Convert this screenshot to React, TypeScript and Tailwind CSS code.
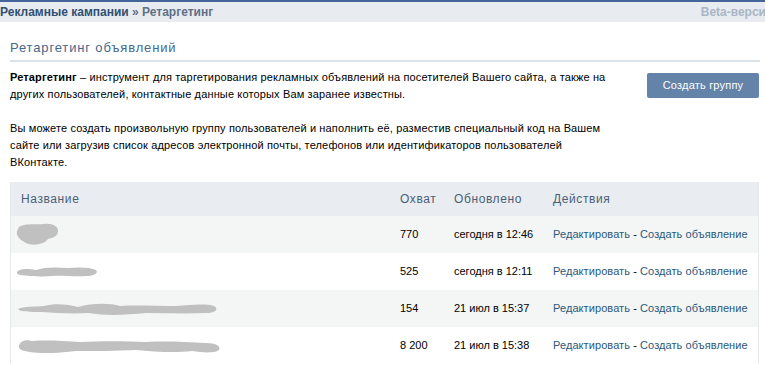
import React from 'react';

type Row = {
    blob: React.ReactNode;
    reach: string;
    updated: string;
};

const Blob: React.FC<{ w: number; h: number; d: string }> = ({ w, h, d }) => (
    <svg width={w} height={h} viewBox={`0 0 ${w} ${h}`} className="block">
        <path d={d} fill="#c0c0c0" />
    </svg>
);

const rows: Row[] = [
    {
        blob: <Blob w={44} h={23} d="M3 4 C9 0 20 2 28 1 C36 0 43 3 42 9 C41 14 36 15 32 16 C28 22 16 23 10 20 C4 17 0 13 1 8 Z" />,
        reach: '770',
        updated: 'сегодня в 12:46',
    },
    {
        blob: <Blob w={82} h={12} d="M2 5 C6 2 14 3 20 4 C28 1 40 1 52 2 C62 1 74 1 80 4 C83 7 78 10 70 10 C58 11 46 9 36 10 C26 11 12 10 4 9 C1 8 0 7 2 5 Z" />,
        reach: '525',
        updated: 'сегодня в 12:11',
    },
    {
        blob: <Blob w={202} h={16} d="M2 8 C8 5 18 6 28 5 C38 2 52 3 62 6 C76 2 94 2 104 5 C120 4 140 5 160 5 C174 4 190 2 198 5 C203 8 200 12 190 12 C170 13 150 12 130 12 C110 14 90 15 72 12 C56 13 40 12 26 11 C14 11 4 11 2 8 Z" />,
        reach: '154',
        updated: '21 июл в 15:37',
    },
    {
        blob: <Blob w={205} h={18} d="M3 9 C4 4 10 2 16 4 C30 3 48 4 64 5 C84 4 110 4 130 5 C150 4 170 5 190 6 C200 6 205 9 203 13 C200 16 188 16 176 14 C160 16 140 15 120 13 C100 14 80 14 60 14 C44 16 26 17 14 15 C6 14 2 12 3 9 Z" />,
        reach: '8 200',
        updated: '21 июл в 15:38',
    },
];

export default function App() {
    return (
        <div
            className="w-[765px] h-[365px] overflow-hidden bg-white text-[11px] text-black"
            style={{ fontFamily: '"Liberation Sans", Arial, sans-serif' }}
        >
            {/* Top bar */}
            <div className="h-[22px] border-t-2 border-[#44659a] bg-[#e8ebef] flex items-center justify-between">
                <div className="font-bold text-[12px] whitespace-nowrap">
                    <span className="text-[#2f4f73]">Рекламные кампании</span>
                    <span className="text-[#5d7188]"> » Ретаргетинг</span>
                </div>
                <div className="font-bold text-[12px] text-[#a8b6c6] whitespace-nowrap -mr-[8px]">Beta-версия</div>
            </div>

            <div className="pl-[10px] pr-[5px]">
                {/* Heading */}
                <div className="mt-[18px] pb-[4px] border-b-2 border-[#dae1e8]">
                    <h1 className="text-[13px] leading-[16px] tracking-[0.85px] text-[#45688e]">Ретаргетинг объявлений</h1>
                </div>

                {/* Intro */}
                <div className="flex justify-between mt-[7px]">
                    <div className="w-[615px] leading-[17px] tracking-[0.14px]">
                        <p>
                            <b>Ретаргетинг</b> – инструмент для таргетирования рекламных объявлений на посетителей Вашего сайта, а также на других пользователей, контактные данные которых Вам заранее известны.
                        </p>
                        <p className="mt-[17px] w-[600px]">
                            Вы можете создать произвольную группу пользователей и наполнить её, разместив специальный код на Вашем сайте или загрузив список адресов электронной почты, телефонов или идентификаторов пользователей ВКонтакте.
                        </p>
                    </div>
                    <button className="mt-[4px] mr-[1px] w-[112px] h-[25px] rounded-[2px] bg-[#6383a8] text-white text-[11px] tracking-[0.2px]">
                        Создать группу
                    </button>
                </div>

                {/* Table */}
                <div className="mt-[11px] mr-[1px] border-l border-r border-[#e6e9ec]">
                    <div className="grid grid-cols-[379px_54px_99px_1fr] h-[34px] items-center bg-[#e9edf1] text-[12px] tracking-[0.6px] text-[#4a5f76]">
                        <div className="pl-[10px]">Название</div>
                        <div className="pl-[10px]">Охват</div>
                        <div className="pl-[10px]">Обновлено</div>
                        <div className="pl-[10px]">Действия</div>
                    </div>
                    {rows.map((r, i) => (
                        <div
                            key={i}
                            className={`grid grid-cols-[379px_54px_99px_1fr] h-[37px] items-center ${i % 2 === 0 ? 'bg-[#f4f6f6]' : 'bg-white'}`}
                        >
                            <div className="pl-[5px]">{r.blob}</div>
                            <div className="pl-[10px]">{r.reach}</div>
                            <div className="pl-[10px] whitespace-nowrap">{r.updated}</div>
                            <div className="pl-[10px] whitespace-nowrap tracking-[0.08px]">
                                <a className="text-[#2b587a]">Редактировать</a>
                                <span> - </span>
                                <a className="text-[#2b587a]">Создать объявление</a>
                            </div>
                        </div>
                    ))}
                </div>
            </div>
        </div>
    );
}
